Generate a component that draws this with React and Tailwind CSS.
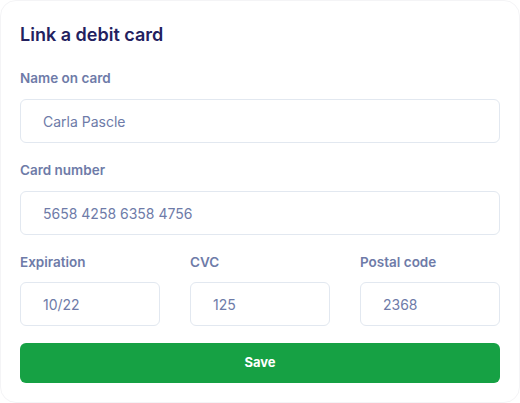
export default function App() {
  const font = { fontFamily: "Inter, 'Noto Sans', sans-serif" };
  const inputCls =
    "h-[44px] w-full rounded-md border border-[#e2e8f0] bg-white px-[22px] text-[14px] text-[#6e7ba8] outline-none";
  const labelCls = "text-[13.5px] leading-[20px] font-semibold text-[#6e7ba8]";
  return (
    <div className="h-[403px] w-[520px] bg-white" style={font}>
      <div className="flex h-[403px] w-[520px] flex-col rounded-2xl border border-[#f4f4f6] bg-white px-[19px] pt-[22px]">
        <h1 className="text-[18px] font-semibold leading-[24px] text-[#23215f]">Link a debit card</h1>
        <div className="mt-[21px] flex flex-col gap-[11px]">
          <label className={labelCls}>Name on card</label>
          <input className={inputCls} defaultValue="Carla Pascle" />
        </div>
        <div className="mt-[17px] flex flex-col gap-[11px]">
          <label className={labelCls}>Card number</label>
          <input className={inputCls} defaultValue="5658 4258 6358 4756" />
        </div>
        <div className="mt-[17px] grid grid-cols-3 gap-[30px]">
          {[
            ["Expiration", "10/22"],
            ["CVC", "125"],
            ["Postal code", "2368"],
          ].map(([l, v]) => (
            <div key={l} className="flex flex-col gap-[10px]">
              <label className={labelCls}>{l}</label>
              <input className={inputCls} defaultValue={v} />
            </div>
          ))}
        </div>
        <button className="mt-[17px] h-[40px] w-full rounded-md bg-[#16a144] text-[13px] font-bold text-white">
          Save
        </button>
      </div>
    </div>
  );
}
